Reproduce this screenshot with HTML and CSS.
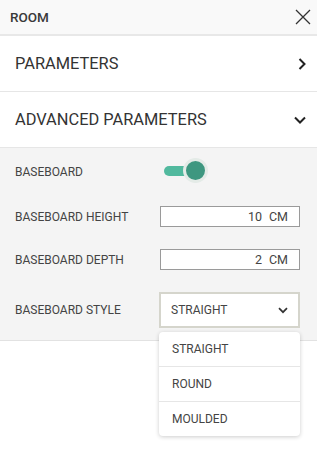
FILE: index.html
```html
<!DOCTYPE html>
<html lang="en">
<head>
    <meta charset="UTF-8">
    <meta name="viewport" content="width=device-width, initial-scale=1.0">
    <title>Room</title>
    <link rel="stylesheet" href="styles.css">
</head>
<body>
    <div class="panel">
        <div class="header">
            <span class="title">ROOM</span>
            <svg class="close" width="16" height="16" viewBox="0 0 16 16">
                <path d="M1 1 L15 15 M15 1 L1 15" stroke="#333" stroke-width="1.3" fill="none"/>
            </svg>
        </div>

        <div class="section">
            <span>PARAMETERS</span>
            <svg width="8" height="12" viewBox="0 0 8 12">
                <path d="M1.5 1 L6.5 6 L1.5 11" stroke="#222" stroke-width="2" fill="none"/>
            </svg>
        </div>

        <div class="section">
            <span>ADVANCED PARAMETERS</span>
            <svg width="12" height="8" viewBox="0 0 12 8">
                <path d="M1 1.5 L6 6.5 L11 1.5" stroke="#222" stroke-width="2" fill="none"/>
            </svg>
        </div>

        <div class="advanced">
            <div class="field">
                <label>BASEBOARD</label>
                <div class="toggle">
                    <span class="track"></span>
                    <span class="knob"></span>
                </div>
            </div>
            <div class="field">
                <label>BASEBOARD HEIGHT</label>
                <div class="number">
                    <input type="text" value="10" size="1">
                    <span class="unit">CM</span>
                </div>
            </div>
            <div class="field">
                <label>BASEBOARD DEPTH</label>
                <div class="number">
                    <input type="text" value="2" size="1">
                    <span class="unit">CM</span>
                </div>
            </div>
            <div class="field">
                <label>BASEBOARD STYLE</label>
                <div class="select-wrap">
                    <div class="select">
                        <span>STRAIGHT</span>
                        <svg width="10" height="7" viewBox="0 0 10 7">
                            <path d="M1 1.2 L5 5.2 L9 1.2" stroke="#333" stroke-width="1.7" fill="none"/>
                        </svg>
                    </div>
                    <ul class="options">
                        <li>STRAIGHT</li>
                        <li>ROUND</li>
                        <li>MOULDED</li>
                    </ul>
                </div>
            </div>
        </div>
    </div>
</body>
</html>
```

FILE: styles.css
```css
html, body {
    min-height: 100vh;
}

body {
    margin: 0;
    font-family: Roboto, "Liberation Sans", sans-serif;
    color: #333;
    background: #fff;
}

.panel {
    width: 317px;
    min-height: 100vh;
    position: relative;
}

.header {
    height: 34px;
    display: flex;
    align-items: center;
    justify-content: space-between;
    padding: 0 6px 0 10px;
    background: #f9f9f9;
    border-bottom: 2px solid #e8e8e8;
}

.title {
    font-size: 13.5px;
    font-weight: 500;
    color: #3a3a3a;
}

.section {
    height: 55px;
    display: flex;
    align-items: center;
    justify-content: space-between;
    padding: 0 11px 0 15px;
    border-bottom: 1px solid #e6e6e6;
    font-size: 16.4px;
    color: #333;
}

.advanced {
    background: #f4f4f4;
    padding: 12px 17px 12px 15px;
    border-bottom: 1px solid #e2e2e2;
    display: flex;
    flex-direction: column;
    gap: 22px;
}

.field {
    display: grid;
    grid-template-columns: 145px minmax(0, 1fr);
    align-items: center;
}

.field label {
    font-size: 12px;
    color: #444;
}

.toggle {
    position: relative;
    width: 48px;
    height: 24px;
}

.toggle .track {
    position: absolute;
    left: 4px;
    top: 6px;
    width: 36px;
    height: 10px;
    border-radius: 5px;
    background: #51b99e;
}

.toggle .knob {
    position: absolute;
    left: 23px;
    top: -2px;
    width: 19px;
    height: 19px;
    border-radius: 50%;
    background: #3e9780;
    border: 3px solid #e4ebe7;
}

.number {
    height: 19px;
    display: flex;
    align-items: center;
    background: #fff;
    border: 1px solid #9a9a9a;
    padding: 0 11px 0 6px;
    font-size: 12.5px;
    color: #444;
}

.number input {
    flex: 1;
    width: 0;
    min-width: 0;
    border: none;
    outline: none;
    padding: 0;
    text-align: right;
    font: inherit;
    color: inherit;
    background: transparent;
}

.number .unit {
    margin-left: 7px;
}

.select-wrap {
    position: relative;
    width: 141px;
    margin-left: -1px;
}

.select {
    height: 32px;
    display: flex;
    align-items: center;
    justify-content: space-between;
    padding: 0 10px 0 10px;
    background: #fff;
    border: 2px solid #d5d5cc;
    font-size: 12px;
    color: #444;
}

.options {
    position: absolute;
    z-index: 10;
    left: 0;
    top: 40px;
    width: 141px;
    margin: 0;
    padding: 0;
    list-style: none;
    background: #fff;
    border-radius: 4px;
    box-shadow: 0 1px 4px rgba(0, 0, 0, 0.2);
}

.options li {
    display: block;
    height: 34px;
    line-height: 34px;
    padding-left: 13px;
    font-size: 12px;
    color: #444;
    border-bottom: 1px solid #e6e6e6;
}

.options li:last-child {
    border-bottom: none;
}
```
